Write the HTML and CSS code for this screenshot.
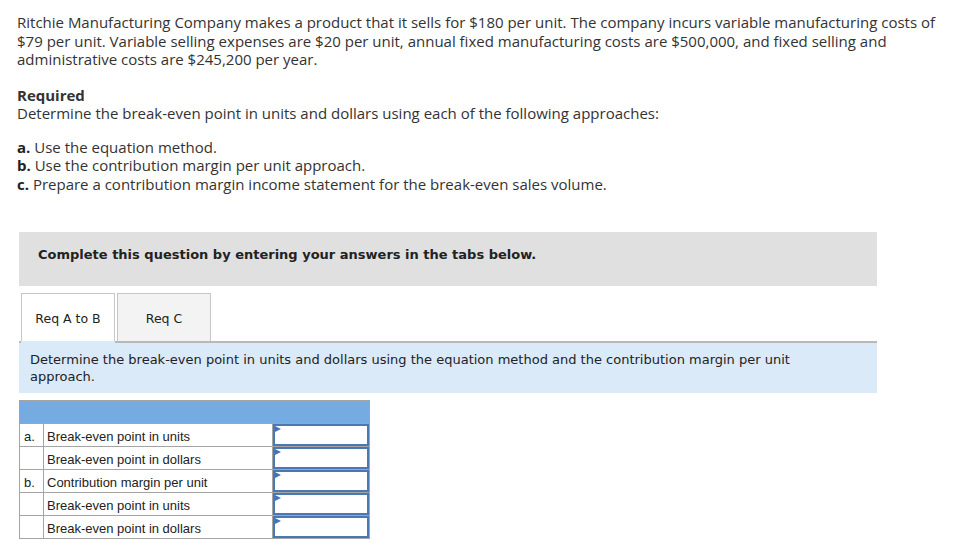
FILE: index.html
```html
<!DOCTYPE html>
<html>
<head>
<meta charset="utf-8">
<link rel="stylesheet" href="styles.css">
</head>
<body>
<div class="page">
  <p class="intro">Ritchie Manufacturing Company makes a product that it sells for $180 per unit. The company incurs variable manufacturing costs of<br>$79 per unit. Variable selling expenses are $20 per unit, annual fixed manufacturing costs are $500,000, and fixed selling and<br>administrative costs are $245,200 per year.</p>
  <p class="req-title">Required</p>
  <p class="req-text">Determine the break-even point in units and dollars using each of the following approaches:</p>
  <ul class="parts">
    <li><b>a.</b> Use the equation method.</li>
    <li><b>b.</b> Use the contribution margin per unit approach.</li>
    <li><b>c.</b> Prepare a contribution margin income statement for the break-even sales volume.</li>
  </ul>

  <div class="complete">Complete this question by entering your answers in the tabs below.</div>

  <div class="tabs">
    <div class="tab active">Req A to B</div>
    <div class="tab">Req C</div>
  </div>
  <div class="instr">Determine the break-even point in units and dollars using the equation method and the contribution margin per unit approach.</div>

  <table class="answers">
    <tr class="head"><td colspan="3"></td></tr>
    <tr><td class="lbl">a.</td><td class="desc">Break-even point in units</td><td class="inp"><div class="box"></div></td></tr>
    <tr><td class="lbl"></td><td class="desc">Break-even point in dollars</td><td class="inp"><div class="box"></div></td></tr>
    <tr><td class="lbl">b.</td><td class="desc">Contribution margin per unit</td><td class="inp"><div class="box"></div></td></tr>
    <tr><td class="lbl"></td><td class="desc">Break-even point in units</td><td class="inp"><div class="box"></div></td></tr>
    <tr><td class="lbl"></td><td class="desc">Break-even point in dollars</td><td class="inp"><div class="box"></div></td></tr>
  </table>
</div>
</body>
</html>
```

FILE: styles.css
```css
* { box-sizing: border-box; }
html, body { margin: 0; padding: 0; background: #fff; }
.page {
  padding: 13px 0 0 17px;
  color: #333;
  font-family: "Open Sans", "Liberation Sans", sans-serif;
  font-size: 15px;
  line-height: 18.5px;
}
.intro { margin: 0; white-space: nowrap; }
.req-title { margin: 17px 0 0; font-weight: bold; }
.req-text { margin: 0; }
.parts { list-style: none; margin: 15px 0 0; padding: 0; }
.parts b { color: #222; }

.complete {
  margin: 39px 0 0 2px;
  width: 858px;
  height: 54px;
  background: #e0e0e0;
  padding: 14px 0 0 19px;
  font-family: "DejaVu Sans", Verdana, sans-serif;
  font-weight: bold;
  font-size: 13px;
  color: #222;
}
.tabs { display: flex; gap: 2px; margin: 7px 0 0 4px; }
.tab {
  width: 94px;
  height: 48px;
  border: 1px solid #c6c6c6;
  border-bottom: none;
  background: #f3f3f3;
  font-family: "DejaVu Sans", Verdana, sans-serif;
  font-size: 12.5px;
  color: #222;
  display: flex;
  align-items: center;
  justify-content: center;
  padding-top: 3px;
}
.tab.active { background: #fff; position: relative; }
.tab.active::after {
  content: "";
  position: absolute;
  left: -1px;
  right: -1px;
  bottom: -2px;
  height: 2px;
  background: #daeaf8;
}
.instr {
  margin-left: 2px;
  width: 858px;
  height: 52px;
  background: #daeaf8;
  border-top: 2px solid #b8b8b8;
  padding: 8px 60px 0 11px;
  font-family: "DejaVu Sans", Verdana, sans-serif;
  font-size: 13px;
  line-height: 17px;
  color: #222;
}
.answers {
  margin: 7px 0 0 2px;
  border-collapse: collapse;
  font-family: "Liberation Sans", Arial, sans-serif;
  font-size: 13px;
  line-height: 16px;
  color: #222;
}
.answers td { border: 1px solid #a4a4a4; height: 23px; padding: 4px 0 0; }
.answers .head td { background: #76abe2; height: 23px; }
.lbl { width: 24px; padding-left: 4px !important; }
.desc { width: 229px; padding-left: 3px !important; }
.inp { width: 97px; position: relative; }
.box {
  position: absolute;
  inset: 0;
  border: 2px solid #4b77b4;
  background: #fff;
}
.box::before {
  content: "";
  position: absolute;
  left: 0;
  top: 0;
  border-left: 6px solid #3f74c0;
  border-top: 3px solid transparent;
  border-bottom: 3px solid transparent;
}
```
